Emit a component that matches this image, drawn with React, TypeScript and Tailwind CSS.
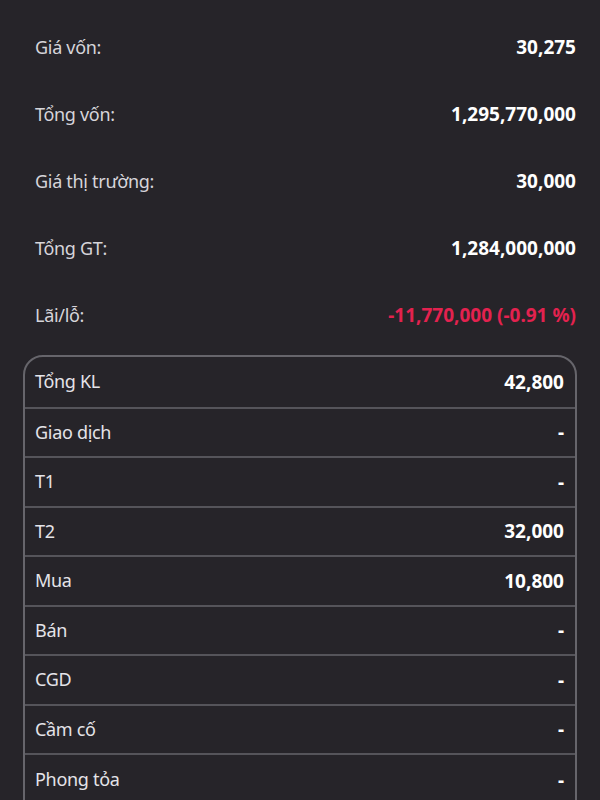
import React from "react";

const top = [
  { l: "Giá vốn:", v: "30,275" },
  { l: "Tổng vốn:", v: "1,295,770,000" },
  { l: "Giá thị trường:", v: "30,000" },
  { l: "Tổng GT:", v: "1,284,000,000" },
];

const rows = [
  { l: "Tổng KL", v: "42,800" },
  { l: "Giao dịch", v: "-" },
  { l: "T1", v: "-" },
  { l: "T2", v: "32,000" },
  { l: "Mua", v: "10,800" },
  { l: "Bán", v: "-" },
  { l: "CGD", v: "-" },
  { l: "Cầm cố", v: "-" },
  { l: "Phong tỏa", v: "-" },
];

export default function App() {
  return (
    <div
      className="w-[600px] h-[800px] overflow-hidden bg-[#262429] text-[18px]"
      style={{ fontFamily: '"Noto Sans", "Open Sans", sans-serif' }}
    >
      <div className="pt-[14px] pl-[35px] pr-[24px]">
        {top.map((r) => (
          <div key={r.l} className="h-[67px] flex items-center justify-between">
            <span className="text-[#d6d5da] tracking-[-0.3px]">{r.l}</span>
            <span className="text-white font-bold text-[19px]">{r.v}</span>
          </div>
        ))}
        <div className="h-[67px] flex items-center justify-between">
          <span className="text-[#d6d5da] tracking-[-0.3px]">Lãi/lỗ:</span>
          <span className="text-[#e3224f] font-bold text-[19px]">-11,770,000 (-0.91 %)</span>
        </div>
      </div>
      <div className="mt-[6px] ml-[23px] w-[554px] border-2 border-[#66656b] rounded-[20px] overflow-hidden">
        {rows.map((r, i) => (
          <div
            key={r.l}
            className={
              "flex justify-between pl-[10px] pr-[11px] " +
              (i > 0 ? "border-t-2 border-[#55545a] " : "") +
              (i === rows.length - 1 ? "h-[80px] items-start pt-[11px]" : "h-[49.5px] items-center")
            }
          >
            <span className="text-[#e4e3e8] tracking-[-0.3px]">{r.l}</span>
            <span className="text-white font-bold text-[19px]">{r.v}</span>
          </div>
        ))}
      </div>
    </div>
  );
}
